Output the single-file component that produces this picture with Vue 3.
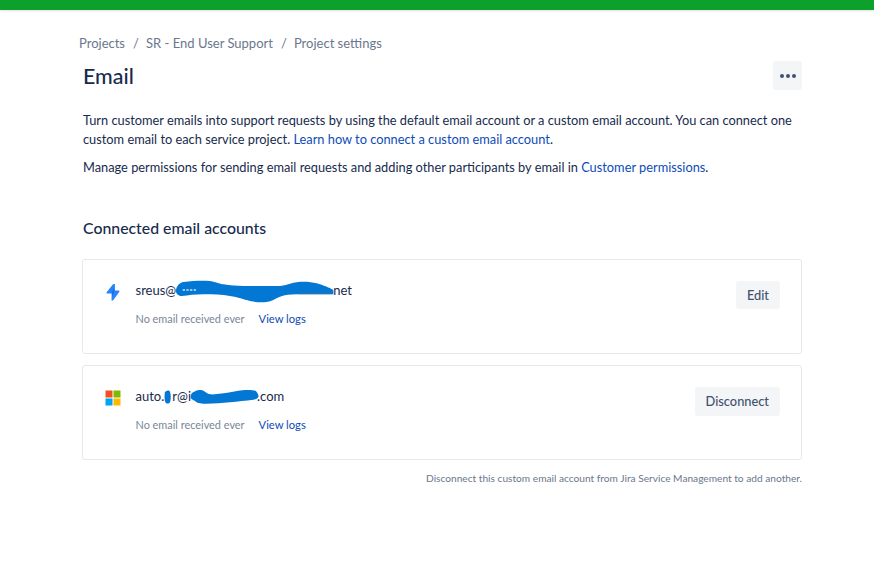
<script setup>
</script>

<template>
  <div class="page">
    <div class="topbar"></div>
    <main class="content">
      <nav class="crumbs">
        <span>Projects</span><i>/</i><span>SR - End User Support</span><i>/</i><span>Project settings</span>
      </nav>
      <header class="head">
        <h1>Email</h1>
        <button class="more" aria-label="More">
          <svg width="18" height="6" viewBox="0 0 18 6"><circle cx="3" cy="3" r="2" /><circle cx="9" cy="3" r="2" /><circle cx="15" cy="3" r="2" /></svg>
        </button>
      </header>
      <p class="intro">Turn customer emails into support requests by using the default email account or a custom email account. You can connect one custom email to each service project. <a>Learn how to connect a custom email account</a>.</p>
      <p class="intro second">Manage permissions for sending email requests and adding other participants by email in <a>Customer permissions</a>.</p>
      <h2>Connected email accounts</h2>

      <section class="card">
        <svg class="icon" width="16" height="20" viewBox="0 0 16 20">
          <path d="M8 3.2 10 3 9.8 9.5h3.7c1 0 1.3 1 .5 1.8L8 19.6l-1.5-.1.2-7H2.5c-1 0-1.3-1-.5-1.8L8 3.2Z" fill="#2684ff" />
          <path d="M9.3 6 6.8 11.5 7 16 9.4 10.6 9.3 6Z" fill="#1b6fe6" />
        </svg>
        <div class="info">
          <div class="addr">sreus@<span class="gap-a"></span>net
            <svg class="blot blot-a" width="190" height="30" viewBox="0 0 570 90">
              <path d="M18 45C18 30 30 20 40 18 70 14 100 13 120 15 140 18 150 24 160 25 180 29 200 30 220 30L330 30C350 28 365 20 385 18 405 16 425 18 440 22 460 28 480 36 490 42L490 55 380 55C360 55 345 57 330 62 315 68 305 76 290 78 270 80 255 78 240 75 220 70 205 64 180 60 155 56 130 55 100 55 75 55 55 58 35 60 25 60 18 53 18 45Z" fill="#0277d4"/>
              <path d="M38 42h40" stroke="#cfe3f6" stroke-width="4" stroke-dasharray="7 4" fill="none"/>
              <path d="M385 53h100" stroke="#3f6e95" stroke-width="4" stroke-dasharray="6 3" fill="none"/>
            </svg>
          </div>
          <div class="meta"><span>No email received ever</span><a>View logs</a></div>
        </div>
        <button class="btn">Edit</button>
      </section>

      <section class="card">
        <svg class="icon ms" width="16" height="16" viewBox="0 0 16 16">
          <rect x="0.5" y="0.5" width="7" height="7" fill="#f25022" />
          <rect x="8.5" y="0.5" width="7" height="7" fill="#7fba00" />
          <rect x="0.5" y="8.5" width="7" height="7" fill="#00a4ef" />
          <rect x="8.5" y="8.5" width="7" height="7" fill="#ffb900" />
        </svg>
        <div class="info">
          <div class="addr">auto.<span class="gap-b"></span>r@i<span class="gap-c"></span>.com
            <svg class="blot blot-b" width="160" height="24" viewBox="0 0 480 72">
              <path d="M105 22c3-6 12-8 15-2 3 10 3 22 0 32-3 5-11 5-14 0-3-8-3-20-1-30Z" fill="#0277d4"/>
              <path d="M185 25C195 17 205 13 217 16 225 19 231 27 241 28 261 29 281 25 301 22 319 19 337 14 351 15 365 15 378 16 380 21 383 26 387 31 385 36 383 41 375 43 370 44 348 47 322 49 300 52 276 54 252 56 230 56 216 56 202 54 198 50 194 46 184 44 182 38 182 33 183 29 185 25Z" fill="#0277d4"/>
            </svg>
          </div>
          <div class="meta"><span>No email received ever</span><a>View logs</a></div>
        </div>
        <button class="btn">Disconnect</button>
      </section>

      <p class="foot">Disconnect this custom email account from Jira Service Management to add another.</p>
    </main>
  </div>
</template>

<style>
html, body { margin: 0; background: #fff; }
</style>

<style scoped>
.page { font-family: Lato, "Noto Sans", sans-serif; color: #172b4d; width: 874px; height: 573px; overflow: hidden; }
.topbar { height: 10px; background: #0ca12b; box-shadow: 0 1px 2px rgba(0,0,0,.12); }
.content { width: 720px; margin-left: 82px; }
.crumbs { margin-left: -3px; padding-top: 24px; height: 18px; font-size: 13px; line-height: 18px; color: #6b778c; display: flex; }
.crumbs i { font-style: normal; margin: 0 8px; width: 5px; text-align: center; }
.head { display: flex; justify-content: space-between; align-items: center; padding-top: 9px; height: 32px; }
h1 { margin: -2px 0 0 1px; font-size: 21.4px; font-weight: 500; line-height: 32px; color: #172b4d; }
.more { width: 29px; height: 29px; border: 0; border-radius: 3px; background: #f4f5f7; display: flex; align-items: center; justify-content: center; padding: 0; margin-top: -3px; }
.more svg { fill: #42526e; }
.intro { margin: 18px 0 0 1px; font-size: 12.8px; line-height: 18.5px; color: #172b4d; width: 718px; }
.intro.second { margin-top: 10px; }
a { color: #0d4bb8; }
h2 { margin: 40px 0 0 1px; font-size: 15.85px; line-height: 22px; font-weight: 500; color: #172b4d; }
.card { box-sizing: border-box; height: 95px; border: 1px solid #e6e8ec; border-radius: 3px; margin-top: 11px; display: flex; align-items: flex-start; padding: 20px 21px 0 22px; }
h2 + .card { margin-top: 20px; }
.icon { flex: none; margin-top: 1px; margin-right: 14.5px; }
.icon.ms { margin-top: 4px; }
.info { flex: 1; }
.addr { position: relative; font-size: 13px; line-height: 20px; color: #172b4d; white-space: nowrap; display: flex; }
.gap-a { display: inline-block; width: 157px; }
.gap-b { display: inline-block; width: 8px; }
.gap-c { display: inline-block; width: 66px; }
.blot { position: absolute; }
.blot-a { left: 34.5px; top: -4px; }
.blot-b { left: -5.5px; top: -1px; }
.meta { margin-top: 11px; font-size: 10.9px; line-height: 16px; display: flex; color: #7a869a; }
.meta a { margin-left: 14px; font-size: 11.2px; }
.btn { flex: none; font-family: inherit; font-size: 12.8px; line-height: 20px; height: 28px; margin-top: 1px; padding: 0 11px; border: 0; border-radius: 3px; background: #f4f5f7; color: #42526e; font-weight: 500; }
.card + .card .btn { height: 29px; }
.foot { margin: 11px 0 0; font-size: 10.16px; line-height: 14px; color: #6b778c; text-align: right; }
</style>
